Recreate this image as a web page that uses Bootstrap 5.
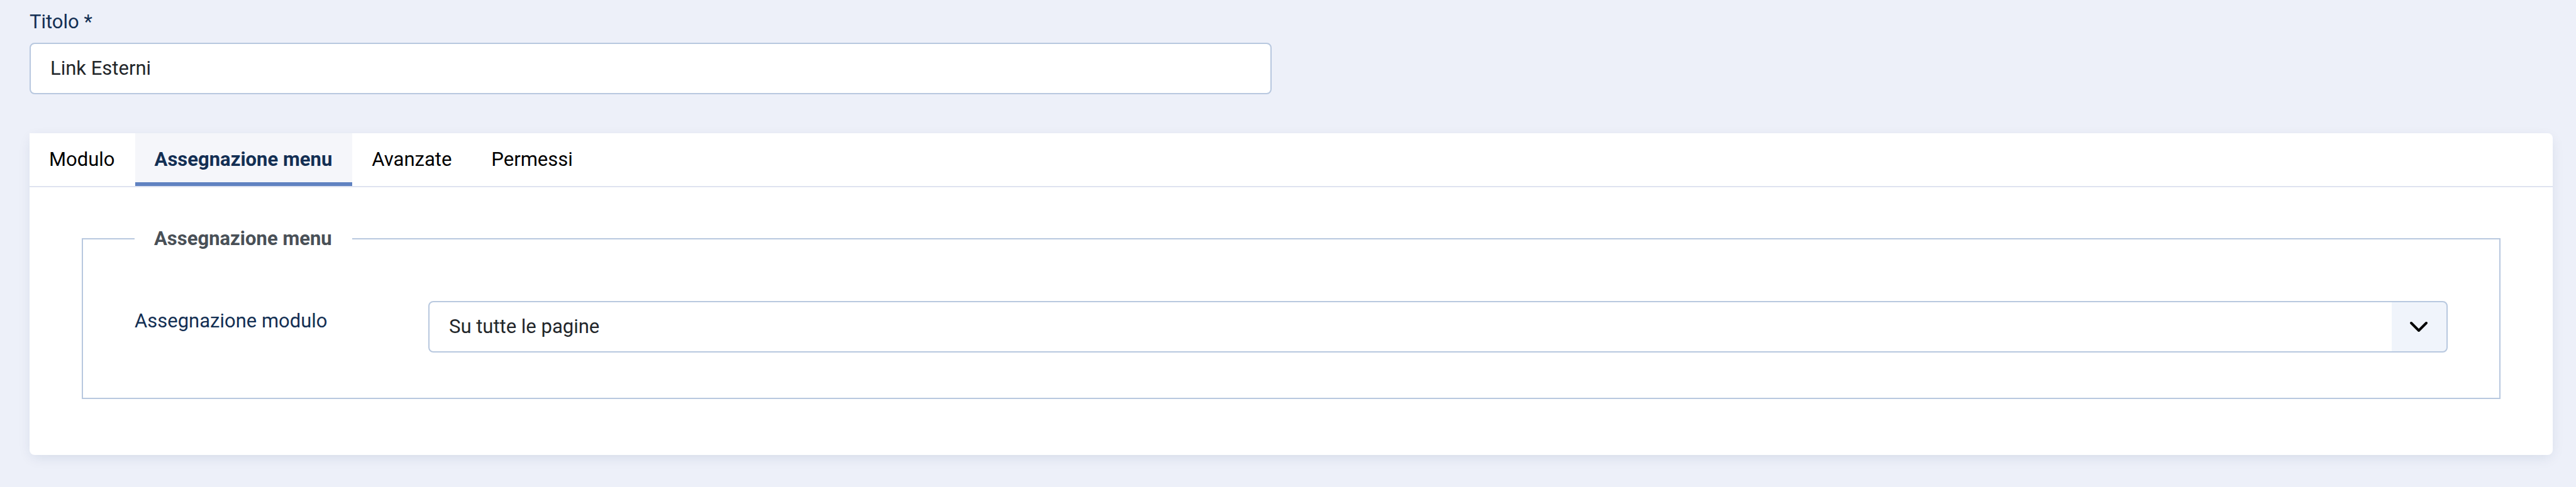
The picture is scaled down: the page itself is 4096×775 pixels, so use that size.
<!DOCTYPE html>
<html lang="it">
<head>
<meta charset="utf-8">
<meta name="viewport" content="width=device-width, initial-scale=1">
<title>Link Esterni</title>
<link rel="stylesheet" href="https://cdn.jsdelivr.net/npm/bootstrap@5.3.0/dist/css/bootstrap.min.css">
<style>
  :root {
    --field-border: #b8c8df;
    --ink: #132f53;
  }
  body {
    background: #edf0f9;
    color: #22262a;
    font-family: Roboto, "Liberation Sans", sans-serif;
    font-size: 31px;
    line-height: 46px;
  }
  .page {
    padding: 12px 37px 51px 47px;
  }
  .title-field {
    padding-right: 31px;
    margin-bottom: 62px;
  }
  .field-label {
    color: var(--ink);
  }
  .title-field .field-label {
    display: block;
    margin-bottom: 10px;
  }
  .form-control,
  .form-select {
    padding: 16px 31px;
    border: 2px solid var(--field-border);
    border-radius: 8px;
    color: #22262a;
    font-size: 31px;
    line-height: 46px;
  }
  .form-select {
    padding-right: 118px;
    background-color: #fff;
    background-image:
      url("data:image/svg+xml,%3csvg xmlns='http://www.w3.org/2000/svg' viewBox='0 0 16 16'%3e%3cpath fill='none' stroke='%23000' stroke-linecap='round' stroke-linejoin='round' stroke-width='2' d='m2 5 6 6 6-6'/%3e%3c/svg%3e"),
      linear-gradient(#f0f4fb, #f0f4fb);
    background-position: right 28px center, right center;
    background-size: 32px 32px, 87px 100%;
    background-repeat: no-repeat;
  }
  .panel {
    background: #fff;
    border-radius: 0 8px 8px 8px;
    box-shadow: 0 6px 22px -4px rgba(20, 50, 90, .12);
  }
  .tab-strip {
    border-bottom: 2px solid #dfe3f0;
  }
  .tab-strip .nav-link {
    padding: 19px 32px 19px 31px;
    border: 0;
    border-radius: 0;
    background: transparent;
    color: #000;
  }
  .tab-strip .nav-link.active {
    background: #f5f6fa;
    color: var(--ink);
    font-weight: 700;
    box-shadow: inset 0 -6px 0 #6082c1;
  }
  .panel-body {
    padding: 59px 83px 89px;
  }
  .options {
    border: 2px solid var(--field-border);
    padding: 76px 82px 72px;
  }
  .options legend {
    float: none;
    width: auto;
    margin: 0;
    padding: 0 32px 0 31px;
    color: #495057;
    font-size: 31px;
    line-height: 46px;
    font-weight: 700;
  }
  .option-label {
    flex: 0 0 467px;
    padding-top: 9px;
  }
</style>
</head>
<body>
<main class="page">
  <form>
    <div class="row g-0">
      <div class="col-6 title-field">
        <label class="field-label" for="title">Titolo *</label>
        <input class="form-control" type="text" id="title" value="Link Esterni" required>
      </div>
    </div>

    <div class="panel">
      <div class="nav tab-strip" role="tablist">
        <button class="nav-link" type="button" role="tab">Modulo</button>
        <button class="nav-link active" type="button" role="tab" aria-selected="true">Assegnazione menu</button>
        <button class="nav-link" type="button" role="tab">Avanzate</button>
        <button class="nav-link" type="button" role="tab">Permessi</button>
      </div>
      <div class="panel-body" role="tabpanel">
        <fieldset class="options">
          <legend>Assegnazione menu</legend>
          <div class="d-flex align-items-start">
            <label class="field-label option-label" for="assignment">Assegnazione modulo</label>
            <select class="form-select" id="assignment">
              <option selected>Su tutte le pagine</option>
              <option>Nessuna pagina</option>
            </select>
          </div>
        </fieldset>
      </div>
    </div>
  </form>
</main>
<script src="https://cdn.jsdelivr.net/npm/bootstrap@5.3.0/dist/js/bootstrap.bundle.min.js"></script>
</body>
</html>
